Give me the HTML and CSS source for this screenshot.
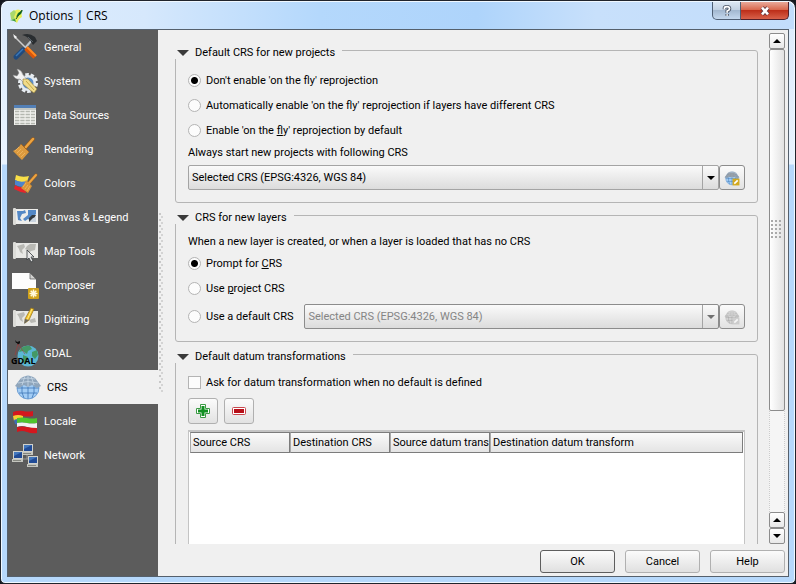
FILE: index.html
```html
<!DOCTYPE html>
<html lang="en">
<head>
    <meta charset="UTF-8">
    <meta name="viewport" content="width=device-width, initial-scale=1.0">
    <title>Options | CRS</title>
    <link rel="stylesheet" href="styles.css">
</head>
<body>
    <div class="window">
        <header class="titlebar">
            <svg class="app-icon" viewBox="0 0 16 16">
                <path d="M5 3 Q9 0 13 3 Q12 6 13 9 L10 11 L8 15 L5 12 L2 11 L3 7 Z" fill="#e9ef5a"/>
                <path d="M1 5 L5 2 L7 4 L5 9 L7 12 L2 11 Z" fill="#a8d86c"/>
                <path d="M14 2 L9 5 L7 9 L9 8 L12 6 Z" fill="#14752b"/>
                <path d="M13 2 L7 11" stroke="#0c4d1d" fill="none"/>
                <path d="M1 12 L6 11 L7 14 L5 13 Z" fill="#3b9e3f"/>
            </svg>
            <h1>Options | CRS</h1>
            <div class="caption-buttons">
                <button class="caption help" aria-label="What's this">
                    <svg viewBox="0 0 14 14"><path d="M4 5 V3.5 Q4 2 7 2 Q10 2 10 4.5 Q10 6 7.2 7 V9 M7.2 10.6 V12.6" fill="none" stroke="#4b5566" stroke-width="4"/><path d="M4 5 V3.5 Q4 2 7 2 Q10 2 10 4.5 Q10 6 7.2 7 V9 M7.2 10.8 V12.4" fill="none" stroke="#fff" stroke-width="2"/></svg>
                </button>
                <button class="caption close" aria-label="Close">
                    <svg viewBox="0 0 14 14"><path d="M3.5 3 L10.5 11 M10.5 3 L3.5 11" stroke="#60323a" stroke-width="5"/><path d="M3.5 3 L10.5 11 M10.5 3 L3.5 11" stroke="#fff" stroke-width="3"/></svg>
                </button>
            </div>
        </header>

        <div class="content">
            <nav class="sidebar">
                <a href="#general">
                    <svg viewBox="0 0 28 28">
                        <path d="M3 3 L14 14" stroke="#ccc" stroke-width="1.500"/>
                        <path d="M2 1 L6 4 L4 6 Z" fill="#f4f4f4"/>
                        <path d="M21 7 L14 15" stroke="#b9c3cb" stroke-width="2"/>
                        <path d="M11 2 Q18 -1 24 4 L26 8 L22 12 L19 7 Q16 3 11 2 Z" fill="#292d30"/>
                        <path d="M17 4 L22 9" stroke="#555e64"/>
                        <path d="M12 17 L5 24" stroke="#204a7e" stroke-width="5" stroke-linecap="round"/>
                        <path d="M12 16 L5 23" stroke="#3b78b8" stroke-width="1.500"/>
                        <path d="M15 15 L24 24" stroke="#d9560c" stroke-width="5"/>
                        <path d="M16 14 L25 23" stroke="#ff8b22" stroke-width="2"/>
                    </svg>
                    <span>General</span>
                </a>
                <a href="#system">
                    <svg viewBox="0 0 28 28">
                        <circle cx="17" cy="16" r="8.5" fill="none" stroke="#e9eef2" stroke-width="3" stroke-dasharray="3.5 1.8"/>
                        <circle cx="17" cy="16" r="8" fill="#e4ebf1"/>
                        <circle cx="17" cy="16" r="5.5" fill="#5d8fc9"/>
                        <path d="M6 2 Q11 3 12 8 L18 15 L15 18 L9 12 Q4 13 2 8 L6 9 L8 6 Z" fill="#f2f2f2" stroke="#888" stroke-width=".5"/>
                        <path d="M12 12 L17 12 L26 22 L23 26 L19 23 L12 17 Z" fill="#f1dc8b" stroke="#8e7b38" stroke-width=".6"/>
                        <path d="M15 14 L23 23" stroke="#c7a946"/>
                    </svg>
                    <span>System</span>
                </a>
                <a href="#sources">
                    <svg viewBox="0 0 28 28">
                        <rect x="3" y="4" width="22" height="20" fill="#f1f1ee"/>
                        <rect x="3" y="4" width="22" height="3" fill="#527fb6"/>
                        <rect x="3" y="7" width="22" height="2" fill="#c4c8c4"/>
                        <path d="M4 10.500H24 M4 13.500H24 M4 16.500H24 M4 19.500H24 M4 22.500H24" stroke="#b4b7b0" stroke-width="1.500" stroke-dasharray="4.300 1"/>
                    </svg>
                    <span>Data Sources</span>
                </a>
                <a href="#rendering">
                    <svg viewBox="0 0 28 28">
                        <path d="M22 4 L14 13" stroke="#9a5b16" stroke-width="3.500" stroke-linecap="round"/>
                        <path d="M22 4 L14 13" stroke="#eda442" stroke-width="2.500" stroke-linecap="round"/>
                        <path d="M10 9 L18 17 L11 25 L2 16 Q7 14 10 9 Z" fill="#dc9a3e"/>
                        <path d="M8 12 L4 16 M10 14 L6 18 M12 16 L8 20 M14 18 L10 22" stroke="#efb966" stroke-width=".8"/>
                        <path d="M10 9 L18 17" stroke="#a8661f"/>
                    </svg>
                    <span>Rendering</span>
                </a>
                <a href="#colors">
                    <svg viewBox="0 0 28 28">
                        <path d="M5 6 Q11 9 18 7 L16 13 Q9 14 4 11 Z" fill="#f8df48"/>
                        <path d="M4 11 Q9 14 16 12 L13 18 Q8 18 4 16 Z" fill="#4d84cd"/>
                        <path d="M4 16 Q8 19 14 18 L15 24 Q8 23 3 20 Z" fill="#e5242b"/>
                        <path d="M25 6 L18 14" stroke="#a3621c" stroke-width="3" stroke-linecap="round"/>
                        <path d="M25 6 L18 14" stroke="#eda442" stroke-width="2" stroke-linecap="round"/>
                        <path d="M15 11 L21 17 L17 24 L10 19 Q14 15 15 11 Z" fill="#d99538"/>
                        <path d="M15 14 L12 18 M17 16 L14 20 M19 17 L16 22" stroke="#efb966" stroke-width=".8"/>
                    </svg>
                    <span>Colors</span>
                </a>
                <a href="#canvas">
                    <svg viewBox="0 0 28 28">
                        <rect x="4" y="6" width="23" height="15" fill="#ededeb"/>
                        <path d="M6 8 H12 L14 7 L15 10 L11 11 L9 15 L11 18 L7 17 Z M17 7 H25 V11 L22 14 L20 18 L17 16 L14 18 L12 16 L17 12 Z" fill="#5388c6"/>
                        <path d="M18 19 V15 L21 12 H25 L21 19 Z" fill="#333a40"/>
                        <path d="M18 19 L22 15 L25 14 V19 Z" fill="#c9d4df"/>
                        <rect x="2" y="5" width="3" height="17" rx="1" fill="#dcdcd8"/>
                    </svg>
                    <span>Canvas &amp; Legend</span>
                </a>
                <a href="#tools">
                    <svg viewBox="0 0 28 28">
                        <rect x="4" y="6" width="23" height="15" fill="#e8e8e5"/>
                        <path d="M6 9 L13 7 L14 10 L11 13 L12 17 L9 15 L8 12 Z M16 9 L19 7 H25 L24 13 L20 14 L17 17 L16 13 L14 12 Z" fill="#b9b9b4"/>
                        <rect x="2" y="5" width="3" height="17" rx="1" fill="#dcdcd8"/>
                        <path d="M16 13 V23 L18 21 L20 25 L22 24 L20 20 H23 Z" fill="#e6e6e6" stroke="#33383b" stroke-width=".8"/>
                    </svg>
                    <span>Map Tools</span>
                </a>
                <a href="#composer">
                    <svg viewBox="0 0 28 28">
                        <path d="M1 2 H19 L25 8 V18 H1 Z" fill="#fdfdfd"/>
                        <path d="M19 2 V8 H25 Z" fill="#d2d2d0" stroke="#555" stroke-width=".7"/>
                        <rect x="17" y="17" width="11" height="11" rx="1" fill="#d0a21b"/>
                        <path d="M22.500 18.500V26.500 M18.500 22.500H26.500 M19.700 19.700L25.300 25.300 M25.300 19.700L19.700 25.300" stroke="#fff8dc" stroke-width="1.500"/>
                    </svg>
                    <span>Composer</span>
                </a>
                <a href="#digitizing">
                    <svg viewBox="0 0 28 28">
                        <rect x="4" y="6" width="23" height="15" fill="#e8e8e5"/>
                        <path d="M6 9 L13 7 L14 10 L11 13 L12 17 L9 15 L8 12 Z M18 15 L24 13 L25 17 L20 18 Z" fill="#b9b9b4"/>
                        <rect x="2" y="5" width="3" height="17" rx="1" fill="#dcdcd8"/>
                        <path d="M20 3 L23 4 L18 15 L14 18 L14 14 Z" fill="#f5c02d" stroke="#927318" stroke-width=".7"/>
                        <path d="M21 4 L16 15" stroke="#fff080"/>
                        <path d="M14 14 L18 15 L13 19 Z" fill="#6b675c"/>
                    </svg>
                    <span>Digitizing</span>
                </a>
                <a href="#gdal">
                    <svg viewBox="0 0 28 28">
                        <circle cx="17" cy="17" r="10.500" fill="#5bb6d4"/>
                        <path d="M10 9 Q15 6 19 7 L21 10 L17 12 L16 15 L12 12 L8 13 Z M21 13 L26 11 L27 16 L24 20 L21 17 Z M12 16 L17 18 L15 25 L12 23 Z" fill="#449966"/>
                        <path d="M4 1 L6 3 L9 2 L9 4 L7 6 L6 4 L5 4 Z" fill="#111"/>
                        <path d="M7 5 L4 16 M7 5 L14 15" stroke="#a63939" stroke-width=".6"/>
                        <text x="0" y="25" class="gdal-text">GDAL</text>
                    </svg>
                    <span>GDAL</span>
                </a>
                <a href="#crs" class="active">
                    <svg viewBox="0 0 28 28">
                        <use href="#globe"/>
                    </svg>
                    <span>CRS</span>
                </a>
                <a href="#locale">
                    <svg viewBox="0 0 28 28">
                        <path d="M2 5 Q7 3 12 4 T22 4 V9 Q17 10 12 9 T2 9 Z" fill="#d3171e"/>
                        <path d="M2 9 Q7 7 12 9 V14 Q7 12 3 14 Z" fill="#f6cd32"/>
                        <path d="M3 13 Q7 11 12 13 V19 L4 17 Z" fill="#3f6cb5"/>
                        <path d="M6 11 Q11 10 16 11 T26 11 V16 Q21 17 16 16 T6 16 Z" fill="#4fc42d"/>
                        <path d="M6 16 Q11 15 16 16 T26 16 V21 Q21 22 16 20 T6 20 Z" fill="#f1f1f1"/>
                        <path d="M6 20 Q11 19 16 20 T26 21 V26 Q21 27 16 25 T6 25 Z" fill="#d3171e"/>
                    </svg>
                    <span>Locale</span>
                </a>
                <a href="#network">
                    <svg viewBox="0 0 28 28">
                        <path d="M8 18 H18 M16 13 V18" stroke="#999"/>
                        <g id="computer">
                            <rect x="12" y="3" width="10" height="9" fill="#d0d1cc"/>
                            <rect x="13" y="4" width="8" height="6" fill="#214b96"/>
                            <path d="M13 4 H21 L13 8 Z" fill="#4377bd"/>
                            <path d="M11 11 H22 V14 H11 Z" fill="#c4c5bf"/>
                            <path d="M12 12.500 H20" stroke="#858780"/>
                        </g>
                        <use href="#computer" x="-10" y="7"/>
                        <use href="#computer" x="5" y="12"/>
                    </svg>
                    <span>Network</span>
                </a>
            </nav>

            <div class="splitter"></div>

            <main>
                <div class="scroll-area">
                    <div class="groups">
                        <fieldset>
                            <legend><span class="arrow-down"></span>Default CRS for new projects</legend>
                            <label class="option"><input type="radio" name="otf" checked>Don't enable 'on the fly' reprojection</label>
                            <label class="option"><input type="radio" name="otf">Automatically enable 'on the fly' reprojection if layers have different CRS</label>
                            <label class="option"><input type="radio" name="otf"><span>Enable 'on the <u>fl</u>y' reprojection by default</span></label>
                            <label class="caption-text" for="project-crs">Always start new projects with following CRS</label>
                            <div class="crs-row">
                                <div class="combo">
                                    <select id="project-crs">
                                        <option>Selected CRS (EPSG:4326, WGS 84)</option>
                                    </select>
                                    <span class="combo-arrow"></span>
                                </div>
                                <button class="tool pick" aria-label="Select CRS">
                                    <svg viewBox="0 0 28 28">
                                        <use href="#globe"/>
                                        <path d="M2 12 L8 5 H18 L26 12 Z" fill="#8d949b" opacity=".7"/>
                                        <rect x="15" y="15" width="12" height="12" fill="#d2a91f"/>
                                        <path d="M18 24 L24 18" stroke="#fff" stroke-width="3"/>
                                    </svg>
                                </button>
                            </div>
                        </fieldset>

                        <fieldset>
                            <legend><span class="arrow-down"></span>CRS for new layers</legend>
                            <p class="caption-text">When a new layer is created, or when a layer is loaded that has no CRS</p>
                            <label class="option"><input type="radio" name="layer" checked><span>Prompt for <u>C</u>RS</span></label>
                            <label class="option"><input type="radio" name="layer"><span>Use <u>p</u>roject CRS</span></label>
                            <div class="crs-row">
                                <label class="option"><input type="radio" name="layer">Use a default CRS</label>
                                <div class="combo">
                                    <select aria-label="Default layer CRS" disabled>
                                        <option>Selected CRS (EPSG:4326, WGS 84)</option>
                                    </select>
                                    <span class="combo-arrow"></span>
                                </div>
                                <button class="tool pick" aria-label="Select CRS" disabled>
                                    <svg viewBox="0 0 28 28">
                                        <use href="#globe"/>
                                        <rect x="15" y="15" width="12" height="12" fill="#bbb"/>
                                        <path d="M18 24 L24 18" stroke="#fff" stroke-width="3"/>
                                    </svg>
                                </button>
                            </div>
                        </fieldset>

                        <fieldset class="datum">
                            <legend><span class="arrow-down"></span>Default datum transformations</legend>
                            <label class="option"><input type="checkbox">Ask for datum transformation when no default is defined</label>
                            <div class="tools">
                                <button class="tool" aria-label="Add transformation">
                                    <svg viewBox="0 0 16 16">
                                        <path d="M5.500 1.500 H10.500 V5.500 H14.500 V10.500 H10.500 V14.500 H5.500 V10.500 H1.500 V5.500 H5.500 Z" fill="#fff" stroke="#3c9a45"/>
                                        <path d="M8 3 V13 M3 8 H13" stroke="#129022" stroke-width="3"/>
                                    </svg>
                                </button>
                                <button class="tool" aria-label="Remove transformation">
                                    <svg viewBox="0 0 16 16">
                                        <rect x="1.500" y="4.500" width="13" height="7" rx="1" fill="#fff" stroke="#c9464d"/>
                                        <rect x="3" y="6" width="10" height="4" fill="#b70f18"/>
                                    </svg>
                                </button>
                            </div>
                            <div class="table-box">
                                <table>
                                    <thead>
                                        <tr>
                                            <th class="col">Source CRS</th>
                                            <th class="col">Destination CRS</th>
                                            <th class="col">Source datum trans</th>
                                            <th>Destination datum transform</th>
                                        </tr>
                                    </thead>
                                </table>
                            </div>
                        </fieldset>
                    </div>

                    <div class="scrollbar">
                        <button class="step up" aria-label="Scroll up"></button>
                        <div class="thumb"><span class="grip"></span></div>
                        <div class="track"></div>
                        <button class="step up" aria-label="Page up"></button>
                        <button class="step down" aria-label="Scroll down"></button>
                    </div>
                </div>

                <footer>
                    <button class="push default">OK</button>
                    <button class="push">Cancel</button>
                    <button class="push">Help</button>
                </footer>
            </main>
        </div>
    </div>

    <svg class="symbols" viewBox="0 0 28 28">
        <defs>
            <g id="globe">
                <circle cx="14" cy="15" r="11" fill="#a3cdf5"/>
                <path d="M3 15 H25 M5 20 H23 M10 25 Q7 20 8 13 M14 13 V26 M18 25 Q21 20 20 13" stroke="#3c75b5" stroke-width=".8" fill="none"/>
                <circle cx="14" cy="15" r="11" fill="none" stroke="#5d92cb" stroke-width=".8"/>
                <path d="M1 13 L7 5 Q14 0 21 5 L27 13 L23 15 L18 12 L14 14 L10 12 L5 15 Z" fill="#8fa5bb"/>
                <path d="M4 10 Q14 7 24 10 M7 6 Q14 4 21 6 M11 3 L8 12 M14 2 V14 M17 3 L20 12" stroke="#c7d7e6" fill="none" stroke-width=".8"/>
            </g>
        </defs>
    </svg>
</body>
</html>
```

FILE: styles.css
```css
* {
    box-sizing: border-box;
}
body {
    margin: 0;
    height: 100vh;
    background: #15181f;
    color: #000;
    font-family: Roboto, "Noto Sans", sans-serif;
    font-size: 11px;
    line-height: 14px;
}
button, select {
    font: inherit;
    color: inherit;
}
.symbols {
    position: absolute;
    width: 0;
    height: 0;
}

/* window frame */
.window {
    display: flex;
    flex-direction: column;
    height: 100vh;
    padding: 0 6px 6px;
    border: 1px solid #20242c;
    border-radius: 8px 8px 5px 5px;
    background: linear-gradient(#dcebfc, #e9f3fe 163px, #b6d8fb 164px);
    box-shadow: inset 0 0 0 1px #f0f8ff;
}
.titlebar {
    display: flex;
    align-items: center;
    height: 28px;
    margin: 0 -5px;
    padding: 0 5px 0 7px;
    gap: 4px;
    border-top: 1px solid #f0f8ff;
    border-radius: 7px 7px 0 0;
    background: linear-gradient(to right, #deedfd, #d6e8fc 18%, #b4d8fc 40%, #aed4fb 60%, #c8e0fb 75%, #c2ddfb);
}
.titlebar h1 {
    flex: 1;
    margin: 0;
    font-family: "Open Sans", "Noto Sans", sans-serif;
    font-size: 12px;
    font-weight: normal;
}
.app-icon {
    width: 16px;
    height: 16px;
}
.caption-buttons {
    display: flex;
    align-self: flex-start;
}
.caption {
    display: flex;
    align-items: center;
    justify-content: center;
    width: 29px;
    height: 18px;
    padding: 0;
    border: 1px solid #4f5f74;
    border-top: 0;
    border-radius: 0 0 0 5px;
    background: linear-gradient(#dce7f3, #c3d2e3 45%, #a3b8d0 50%, #c4d8ee);
}
.caption svg {
    width: 12px;
    height: 12px;
}
.caption.close {
    width: 48px;
    border-color: #52202a;
    border-left: 0;
    border-radius: 0 0 5px 0;
    background: linear-gradient(#e9a99a, #d9694f 45%, #bd2f1a 50%, #d8614a);
}
.content {
    display: flex;
    flex: 1;
    min-height: 0;
    border: 1px solid #55606c;
    background: #f0f0f0;
}

/* category list */
.sidebar {
    width: 150px;
    background: #5c5c5c;
}
.sidebar a {
    display: flex;
    align-items: center;
    gap: 5px;
    height: 34px;
    padding-left: 3px;
    color: #fff;
    text-decoration: none;
}
.sidebar a.active {
    padding-left: 6px;
    background: #f0f0f0;
    color: #000;
}
.sidebar a span {
    padding-top: 2px;
}
.sidebar svg {
    width: 28px;
    height: 28px;
}
.gdal-text {
    font-family: "Open Sans", sans-serif;
    font-size: 9px;
    font-weight: bold;
    fill: #000;
}
.splitter {
    align-self: center;
    width: 7px;
    height: 180px;
    background:
        radial-gradient(circle at 1px 1px, #c8c8c8 1px, transparent 1px) 1px 0 / 7px 6px repeat-y,
        radial-gradient(circle at 1px 1px, #d4d4d4 1px, transparent 1px) 3px 3px / 7px 6px repeat-y;
}

/* settings page */
main {
    display: flex;
    flex: 1;
    flex-direction: column;
    min-width: 0;
    padding: 3px 3px 3px 10px;
}
.scroll-area {
    display: flex;
    flex: 1;
    gap: 11px;
    min-height: 0;
}
.groups {
    flex: 1;
    min-width: 0;
    padding-top: 9px;
    overflow: hidden;
}
fieldset {
    min-width: 0;
    margin: 0 0 4px;
    padding: 9px 12px 12px;
    border: 1px solid #b5b5b5;
    border-radius: 3px;
}
legend {
    display: flex;
    align-items: center;
    height: 17px;
    margin-left: -13px;
    padding: 5px 7px 0 2px;
    background: #f0f0f0;
    line-height: 12px;
}
.arrow-down {
    margin-right: 6px;
    border: 6px solid transparent;
    border-top: 6px solid #3a3a3a;
    border-bottom: 0;
}
.option {
    display: flex;
    align-items: center;
    gap: 5px;
    height: 25px;
    white-space: nowrap;
}
.option input {
    appearance: none;
    width: 13px;
    height: 13px;
    margin: 0;
    border: 1px solid #b4b4b4;
    background: #fcfcfc;
}
.option input[type="radio"] {
    border-radius: 50%;
}
.option input:checked {
    background: radial-gradient(circle, #000 3px, #fcfcfc 4px);
}
.caption-text {
    display: block;
    margin: 3px 0 5px;
    line-height: 14px;
}
p.caption-text {
    margin: 2px 0;
}
.crs-row {
    display: flex;
    align-items: center;
}
.crs-row .option {
    margin-right: 11px;
}
.option + .crs-row {
    margin-top: 3px;
}
.combo {
    position: relative;
    flex: 1;
    min-width: 0;
}
.combo select {
    appearance: none;
    display: block;
    width: 100%;
    height: 25px;
    padding: 0 20px 0 3px;
    border: 1px solid #a4a4a4;
    border-radius: 2px;
    background: linear-gradient(#fafafa, #dcdcdc);
}
.combo select:disabled {
    border-color: #8c8c8c;
    color: #858585;
    opacity: 1;
}
.combo-arrow {
    position: absolute;
    top: 1px;
    right: 1px;
    bottom: 1px;
    width: 16px;
    border-left: 1px solid #a4a4a4;
    pointer-events: none;
}
.combo-arrow::after {
    content: "";
    position: absolute;
    top: 10px;
    left: 4px;
    border: 4px solid transparent;
    border-top-color: #000;
    border-bottom: 0;
}
select:disabled + .combo-arrow::after {
    border-top-color: #707070;
}
.tool {
    display: flex;
    align-items: center;
    justify-content: center;
    width: 30px;
    height: 26px;
    padding: 0;
    border: 1px solid #b0b0b0;
    border-radius: 3px;
    background: linear-gradient(#fbfbfb, #e2e2e2);
}
.tool svg {
    width: 16px;
    height: 16px;
}
.tool.pick {
    width: 26px;
    height: 25px;
    border-color: #8c8c8c;
}
.tool.pick:disabled svg {
    filter: grayscale(1);
    opacity: .6;
}
.tools {
    display: flex;
    gap: 6px;
    margin: 3px 0 6px;
}
.datum {
    padding-top: 7px;
}
.table-box {
    height: 190px;
    border: 2px solid #c4c4c4;
    border-right-width: 1px;
    border-left-width: 1px;
    padding: 0 1px;
    background: #fff;
}
table {
    width: 100%;
    table-layout: fixed;
    border-collapse: separate;
    border-spacing: 0;
}
th {
    height: 21px;
    padding: 0 2px;
    overflow: hidden;
    border: 1px solid #7c7c7c;
    border-left-color: #a8a8a8;
    background: linear-gradient(#fafafa, #e4e4e4);
    font-weight: normal;
    text-align: left;
    white-space: nowrap;
}
th.col {
    width: 100px;
}

/* scrollbar */
.scrollbar {
    display: flex;
    flex-direction: column;
    width: 16px;
}
.step {
    display: flex;
    align-items: center;
    justify-content: center;
    width: 16px;
    height: 16px;
    padding: 0;
    border: 1px solid #8c8c8c;
    border-radius: 2px;
    background: linear-gradient(#fff, #e8e8e8);
}
.step::after {
    content: "";
    border: 4px solid transparent;
}
.step.up::after {
    border-top: 0;
    border-bottom-color: #000;
}
.step.down::after {
    border-bottom: 0;
    border-top-color: #000;
}
.thumb {
    display: flex;
    flex: 78;
    align-items: center;
    justify-content: center;
    border: 1px solid #8c8c8c;
    border-radius: 2px;
    background: linear-gradient(to right, #fff, #e2e2e2);
}
.grip {
    width: 12px;
    height: 20px;
    background: radial-gradient(circle at 1px 1px, #aaa 1px, transparent 1px) 0 0 / 4px 4px;
}
.track {
    flex: 22;
    border: 1px dotted #ccc;
    border-width: 0 1px;
    background: #f5f5f5;
}

footer {
    display: flex;
    justify-content: flex-end;
    gap: 10px;
    padding-top: 6px;
}
.push {
    width: 75px;
    height: 23px;
    padding: 0;
    border: 1px solid #b0b0b0;
    border-radius: 3px;
    background: linear-gradient(#fbfbfb, #e0e0e0);
}
.push.default {
    border-color: #5e5e5e;
}
```
